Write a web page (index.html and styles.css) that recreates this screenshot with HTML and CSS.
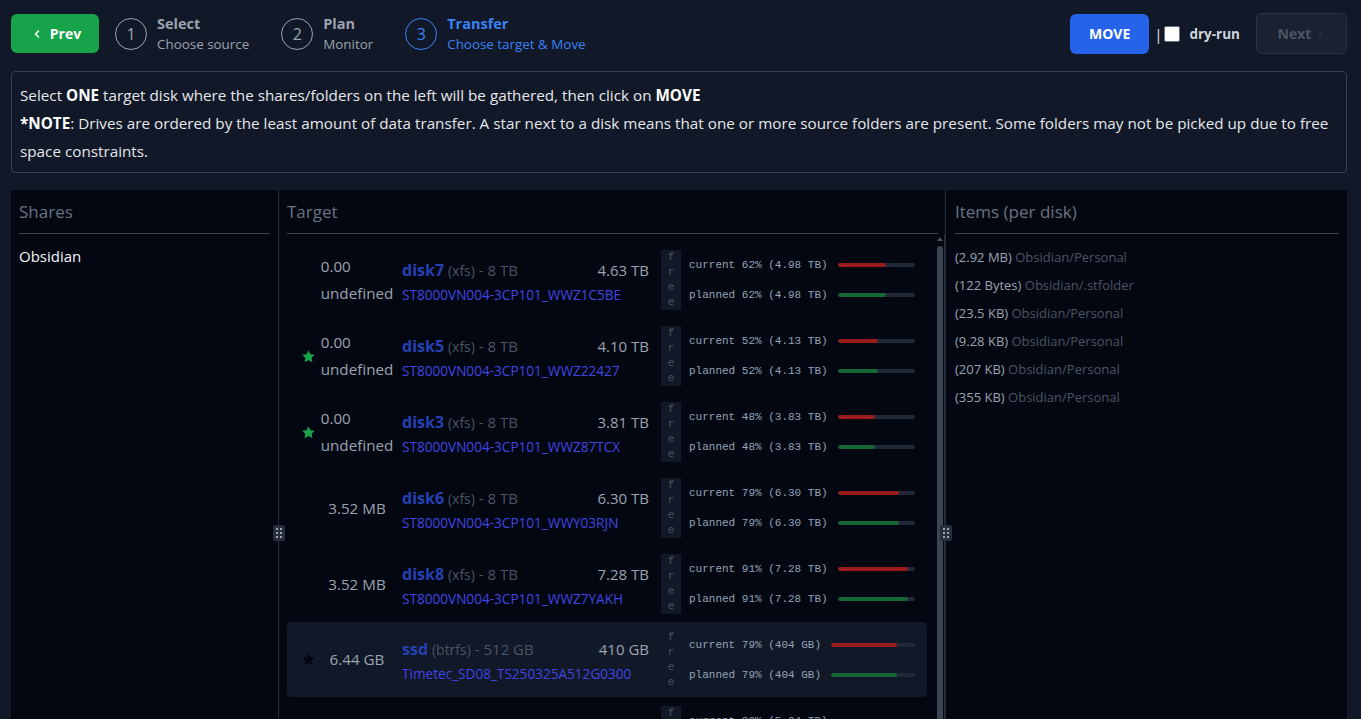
FILE: index.html
```html
<!DOCTYPE html>
<html lang="en">
<head>
<meta charset="utf-8">
<title>Transfer</title>
<link rel="stylesheet" href="styles.css">
</head>
<body>
<div class="page">
  <header class="topbar">
    <div class="nav-left">
      <button class="btn prev"><svg class="chev" viewBox="0 0 24 24"><path d="M15 18l-6-6 6-6"/></svg>Prev</button>
      <div class="steps">
        <div class="step"><span class="circle">1</span><div class="step-text"><b>Select</b><span>Choose source</span></div></div>
        <div class="step"><span class="circle">2</span><div class="step-text"><b>Plan</b><span>Monitor</span></div></div>
        <div class="step active"><span class="circle">3</span><div class="step-text"><b>Transfer</b><span>Choose target &amp; Move</span></div></div>
      </div>
    </div>
    <div class="nav-right">
      <button class="btn move">MOVE</button>
      <span class="pipe">|</span>
      <label class="dry"><span class="checkbox"></span>dry-run</label>
      <button class="btn next">Next<svg class="chev" viewBox="0 0 24 24"><path d="M9 6l6 6-6 6"/></svg></button>
    </div>
  </header>

  <div class="info">
    <p>Select <b>ONE</b> target disk where the shares/folders on the left will be gathered, then click on <b>MOVE</b></p>
    <p><b>*NOTE</b>: Drives are ordered by the least amount of data transfer. A star next to a disk means that one or more source folders are present. Some folders may not be picked up due to free space constraints.</p>
  </div>

  <div class="panels">
    <section class="panel shares">
      <h2 class="panel-title">Shares</h2>
      <div class="share">Obsidian</div>
      <span class="grip"><i></i><i></i><i></i><i></i><i></i><i></i></span>
    </section>

    <section class="panel target">
      <h2 class="panel-title">Target</h2>
      <div class="target-body">
        <div class="disk-list">
          <div class="disk-row">
            <span class="star"></span>
            <div class="used"><span class="wrap">0.00 undefined</span></div>
            <div class="disk">
              <div class="disk-top"><span><b class="dname">disk7</b> <small>(xfs)</small> <span class="cap">- 8 TB</span></span><span class="free-val">4.63 TB</span></div>
              <div class="serial">ST8000VN004-3CP101_WWZ1C5BE</div>
            </div>
            <div class="free"><span>f</span><span>r</span><span>e</span><span>e</span></div>
            <div class="bars">
              <div class="bar-line"><span>current 62% (4.98 TB)</span><div class="bar"><div class="fill red" style="width:62%"></div></div></div>
              <div class="bar-line"><span>planned 62% (4.98 TB)</span><div class="bar"><div class="fill green" style="width:62%"></div></div></div>
            </div>
          </div>

          <div class="disk-row">
            <span class="star"><svg viewBox="0 0 24 24"><polygon class="star-green" points="12,2 15.09,8.26 22,9.27 17,14.14 18.18,21.02 12,17.77 5.82,21.02 7,14.14 2,9.27 8.91,8.26"/></svg></span>
            <div class="used"><span class="wrap">0.00 undefined</span></div>
            <div class="disk">
              <div class="disk-top"><span><b class="dname">disk5</b> <small>(xfs)</small> <span class="cap">- 8 TB</span></span><span class="free-val">4.10 TB</span></div>
              <div class="serial">ST8000VN004-3CP101_WWZ22427</div>
            </div>
            <div class="free"><span>f</span><span>r</span><span>e</span><span>e</span></div>
            <div class="bars">
              <div class="bar-line"><span>current 52% (4.13 TB)</span><div class="bar"><div class="fill red" style="width:52%"></div></div></div>
              <div class="bar-line"><span>planned 52% (4.13 TB)</span><div class="bar"><div class="fill green" style="width:52%"></div></div></div>
            </div>
          </div>

          <div class="disk-row">
            <span class="star"><svg viewBox="0 0 24 24"><polygon class="star-green" points="12,2 15.09,8.26 22,9.27 17,14.14 18.18,21.02 12,17.77 5.82,21.02 7,14.14 2,9.27 8.91,8.26"/></svg></span>
            <div class="used"><span class="wrap">0.00 undefined</span></div>
            <div class="disk">
              <div class="disk-top"><span><b class="dname">disk3</b> <small>(xfs)</small> <span class="cap">- 8 TB</span></span><span class="free-val">3.81 TB</span></div>
              <div class="serial">ST8000VN004-3CP101_WWZ87TCX</div>
            </div>
            <div class="free"><span>f</span><span>r</span><span>e</span><span>e</span></div>
            <div class="bars">
              <div class="bar-line"><span>current 48% (3.83 TB)</span><div class="bar"><div class="fill red" style="width:48%"></div></div></div>
              <div class="bar-line"><span>planned 48% (3.83 TB)</span><div class="bar"><div class="fill green" style="width:48%"></div></div></div>
            </div>
          </div>

          <div class="disk-row">
            <span class="star"></span>
            <div class="used"><span>3.52 MB</span></div>
            <div class="disk">
              <div class="disk-top"><span><b class="dname">disk6</b> <small>(xfs)</small> <span class="cap">- 8 TB</span></span><span class="free-val">6.30 TB</span></div>
              <div class="serial">ST8000VN004-3CP101_WWY03RJN</div>
            </div>
            <div class="free"><span>f</span><span>r</span><span>e</span><span>e</span></div>
            <div class="bars">
              <div class="bar-line"><span>current 79% (6.30 TB)</span><div class="bar"><div class="fill red" style="width:79%"></div></div></div>
              <div class="bar-line"><span>planned 79% (6.30 TB)</span><div class="bar"><div class="fill green" style="width:79%"></div></div></div>
            </div>
          </div>

          <div class="disk-row">
            <span class="star"></span>
            <div class="used"><span>3.52 MB</span></div>
            <div class="disk">
              <div class="disk-top"><span><b class="dname">disk8</b> <small>(xfs)</small> <span class="cap">- 8 TB</span></span><span class="free-val">7.28 TB</span></div>
              <div class="serial">ST8000VN004-3CP101_WWZ7YAKH</div>
            </div>
            <div class="free"><span>f</span><span>r</span><span>e</span><span>e</span></div>
            <div class="bars">
              <div class="bar-line"><span>current 91% (7.28 TB)</span><div class="bar"><div class="fill red" style="width:91%"></div></div></div>
              <div class="bar-line"><span>planned 91% (7.28 TB)</span><div class="bar"><div class="fill green" style="width:91%"></div></div></div>
            </div>
          </div>

          <div class="disk-row selected">
            <span class="star"><svg viewBox="0 0 24 24"><polygon class="star-dark" points="12,2 15.09,8.26 22,9.27 17,14.14 18.18,21.02 12,17.77 5.82,21.02 7,14.14 2,9.27 8.91,8.26"/></svg></span>
            <div class="used"><span>6.44 GB</span></div>
            <div class="disk">
              <div class="disk-top"><span><b class="dname">ssd</b> <small>(btrfs)</small> <span class="cap">- 512 GB</span></span><span class="free-val">410 GB</span></div>
              <div class="serial">Timetec_SD08_TS250325A512G0300</div>
            </div>
            <div class="free"><span>f</span><span>r</span><span>e</span><span>e</span></div>
            <div class="bars">
              <div class="bar-line"><span>current 79% (404 GB)</span><div class="bar"><div class="fill red" style="width:79%"></div></div></div>
              <div class="bar-line"><span>planned 79% (404 GB)</span><div class="bar"><div class="fill green" style="width:79%"></div></div></div>
            </div>
          </div>

          <div class="disk-row">
            <span class="star"></span>
            <div class="used"><span>9.96 GB</span></div>
            <div class="disk">
              <div class="disk-top"><span><b class="dname">disk2</b> <small>(xfs)</small> <span class="cap">- 8 TB</span></span><span class="free-val">5.04 TB</span></div>
              <div class="serial">ST8000VN004-3CP101_WWZ5XK2M</div>
            </div>
            <div class="free"><span>f</span><span>r</span><span>e</span><span>e</span></div>
            <div class="bars">
              <div class="bar-line"><span>current 80% (5.04 TB)</span><div class="bar"><div class="fill red" style="width:80%"></div></div></div>
              <div class="bar-line"><span>planned 80% (5.04 TB)</span><div class="bar"><div class="fill green" style="width:80%"></div></div></div>
            </div>
          </div>
        </div>
        <div class="scrollbar"><span class="arrow"></span><span class="thumb"></span></div>
      </div>
      <span class="grip"><i></i><i></i><i></i><i></i><i></i><i></i></span>
    </section>

    <section class="panel items">
      <h2 class="panel-title">Items (per disk)</h2>
      <ul class="item-list">
        <li><span class="isize">(2.92 MB)</span> Obsidian/Personal</li>
        <li><span class="isize">(122 Bytes)</span> Obsidian/.stfolder</li>
        <li><span class="isize">(23.5 KB)</span> Obsidian/Personal</li>
        <li><span class="isize">(9.28 KB)</span> Obsidian/Personal</li>
        <li><span class="isize">(207 KB)</span> Obsidian/Personal</li>
        <li><span class="isize">(355 KB)</span> Obsidian/Personal</li>
      </ul>
    </section>
  </div>
</div>
</body>
</html>
```

FILE: styles.css
```css
* { box-sizing: border-box; margin: 0; padding: 0; }
html, body { height: 100%; }
body {
  background: #111827;
  font-family: "Open Sans", "Noto Sans", sans-serif;
  color: #e5e7eb;
  overflow: hidden;
}
.page {
  display: flex;
  flex-direction: column;
  height: 719px;
  padding: 14px 14px 0 11px;
}

/* top bar */
.topbar {
  display: flex;
  justify-content: space-between;
  align-items: center;
  height: 39px;
}
.nav-left, .nav-right, .steps, .step { display: flex; align-items: center; }
.steps { gap: 32px; margin-left: 16px; }
.step { gap: 10px; color: #9ca3af; }
.step.active { color: #3b82f6; }
.circle {
  width: 32px; height: 32px;
  border: 1px solid currentColor;
  border-radius: 50%;
  display: flex; align-items: center; justify-content: center;
  font-size: 16px;
}
.step-text { display: flex; flex-direction: column; line-height: 20px; padding-top: 1px; }
.step-text b { font-size: 14.5px; font-weight: 700; }
.step-text span { font-size: 13.4px; }

.btn {
  border: none;
  font-family: inherit;
  font-weight: 700;
  font-size: 14px;
  border-radius: 6px;
  display: flex; align-items: center; justify-content: center;
  height: 39px;
}
.chev { width: 12px; height: 12px; fill: none; stroke: currentColor; stroke-width: 3; stroke-linecap: round; stroke-linejoin: round; }
.prev { background: #16a34a; color: #fff; width: 88px; gap: 7px; padding-left: 2px; }
.move { background: #2563eb; color: #fff; width: 79px; height: 40px; }
.pipe { color: #e5e7eb; margin: 0 2px 0 5px; font-size: 15px; }
.dry { display: flex; align-items: center; gap: 9px; font-weight: 700; font-size: 13.5px; color: #d1d5db; }
.checkbox { width: 16px; height: 16px; background: #fff; border: 1px solid #6b7280; border-radius: 2px; }
.next {
  margin-left: 16px;
  width: 91px; height: 41px;
  background: #1a2130;
  border: 1px solid #2b3443;
  color: #4b5563;
  gap: 4px;
}
.next .chev { width: 10px; height: 10px; stroke-width: 2; color: #374151; }

/* info box */
.info {
  margin-top: 18px;
  border: 1px solid #374151;
  border-radius: 4px;
  padding: 9px 8px 7px;
  font-size: 15.25px;
  line-height: 28px;
  color: #e5e7eb;
}
.info b { font-weight: 700; color: #fff; }

/* panels */
.panels {
  margin-top: 17px;
  flex: 1;
  min-height: 0;
  display: grid;
  grid-template-columns: 268px 667px 1fr;
  background: #030712;
  overflow: hidden;
}
.panel { position: relative; min-height: 0; }
.shares { border-right: 1px solid #262d3a; padding: 0 8px; }
.target { border-right: 1px solid #262d3a; padding: 0 7px 0 8px; display: flex; flex-direction: column; }
.items { padding: 0 8px 0 9px; }
.panel-title {
  font-size: 17px;
  font-weight: 400;
  color: #6b7280;
  line-height: 26px;
  padding: 9px 0 8px;
  border-bottom: 1px solid #3b4250;
}
.share { margin-top: 12px; font-size: 15px; line-height: 20px; color: #f3f4f6; }

.grip {
  position: absolute;
  top: 335px;
  right: -7px;
  width: 12px; height: 16px;
  background: #272f3c;
  border-radius: 2px;
  display: grid;
  grid-template-columns: 2px 2px;
  grid-auto-rows: 2px;
  gap: 2px;
  justify-content: center;
  align-content: center;
  z-index: 2;
}
.grip i { background: #9ca3af; }

/* target list */
.target-body { display: flex; flex: 1; min-height: 0; margin-right: -7px; }
.disk-list { flex: 1; padding: 8px 9px 0 0; overflow: hidden; }
.disk-row {
  display: flex;
  align-items: center;
  height: 76px;
  padding: 8px 12px 8px 13px;
  border-radius: 4px;
}
.disk-row.selected { background: #111827; height: 75px; margin-bottom: 1px; }
.star { width: 16px; height: 16px; display: flex; align-items: center; justify-content: center; }
.star svg { width: 15px; height: 15px; }
.star-green { fill: #16a34a; }
.star-dark { fill: #030712; }
.used {
  width: 76px;
  margin-left: 3px;
  display: flex;
  justify-content: center;
  font-size: 15.2px;
  line-height: 27px;
  color: #9ca3af;
}
.used span { display: block; white-space: nowrap; }
.used .wrap { width: min-content; white-space: normal; }
.disk { width: 247px; margin-left: 7px; display: flex; flex-direction: column; }
.disk-top { display: flex; justify-content: space-between; align-items: baseline; line-height: 28px; font-size: 15px; }
.dname { color: #2541b2; font-weight: 700; font-size: 16px; }
.disk small { font-size: 14px; color: #4b5563; }
.cap { color: #4b5563; }
.free-val { color: #9ca3af; }
.serial { font-size: 13.6px; line-height: 20px; color: #4046e3; }
.free {
  margin-left: 12px;
  width: 20px; height: 60px;
  background: #111827;
  display: flex; flex-direction: column; align-items: center;
  font-family: "Liberation Mono", monospace;
  font-size: 11px;
  line-height: 15px;
  color: #4b5563;
}
.disk-row.selected .free { background: transparent; }
.bars { flex: 1; margin-left: 8px; display: flex; flex-direction: column; }
.bar-line {
  display: flex; align-items: center; gap: 10px;
  height: 30px;
  font-family: "Liberation Mono", monospace;
  font-size: 11px;
  color: #94a3b8;
  white-space: nowrap;
}
.bar { flex: 1; height: 4px; background: #1f2937; border-radius: 2px; overflow: hidden; }
.fill { height: 100%; border-radius: 2px; }
.fill.red { background: #991b1b; }
.fill.green { background: #166534; }

.scrollbar { width: 9px; display: flex; flex-direction: column; align-items: center; padding-top: 3px; border-right: 1px solid #262d3a; }
.arrow { width: 0; height: 0; border-left: 3px solid transparent; border-right: 3px solid transparent; border-bottom: 4px solid #4b5160; }
.thumb { margin-top: 5px; width: 6px; flex: 1; background: #3d4451; border-radius: 3px 3px 0 0; }

/* items */
.item-list { list-style: none; margin-top: 9px; font-size: 13px; line-height: 28px; color: #4b5563; }
.isize { color: #9ca3af; }
```
